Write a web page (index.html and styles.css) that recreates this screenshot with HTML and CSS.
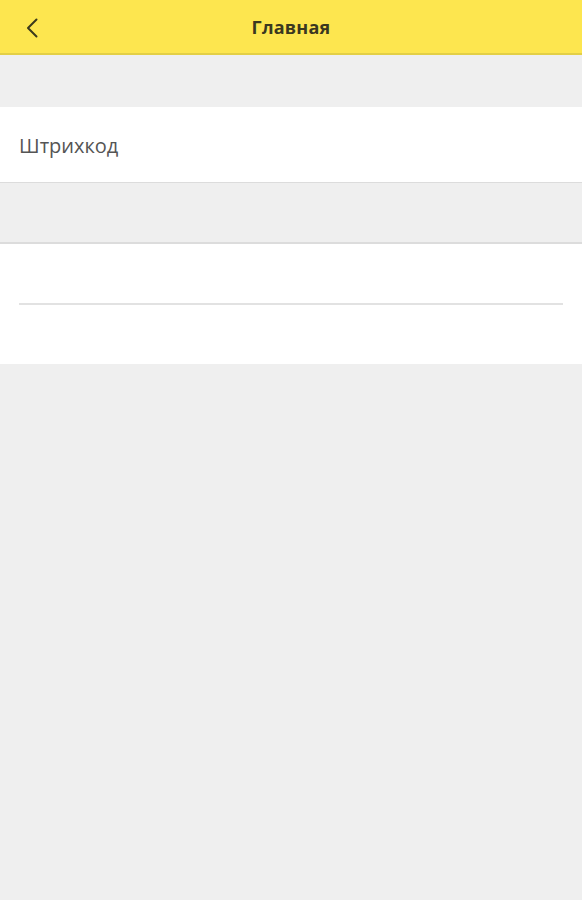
FILE: index.html
```html
<!DOCTYPE html>
<html>
  <head>
    <meta name="viewport" content="width=device-width, initial-scale=1.0" />
    <meta charset="utf-8" />
    <title>Главная</title>
    <link rel="stylesheet" href="styles.css">
  </head>
  <body>
    <header class="header">
      <button class="header__back" type="button" aria-label="Назад">
        <svg width="12" height="20" viewBox="0 0 12 20">
          <path d="M10.5 1.5 L2 10 L10.5 18.5" fill="none" stroke="#3b3a1c" stroke-width="2" stroke-linecap="round" stroke-linejoin="round" />
        </svg>
      </button>
      <h1 class="header__title">Главная</h1>
    </header>

    <div class="gap gap--top"></div>

    <div class="field">
      <span class="field__label">Штрихкод</span>
    </div>

    <div class="gap gap--mid"></div>

    <div class="group">
      <div class="group__input"></div>
    </div>
  </body>
</html>
```

FILE: styles.css
```css
body {
  --color-yellow: #fde64f;
  --color-yellow-line: #e3cf46;
  --color-bg: #efefef;
  --color-line: #dcdcdc;

  margin: 0;
  min-height: 100vh;
  background: var(--color-bg);
  font-family: "Open Sans", Roboto, sans-serif;
}

.header {
  height: 53px;
  display: flex;
  align-items: center;
  justify-content: center;
  position: relative;
  background: var(--color-yellow);
  border-bottom: 2px solid var(--color-yellow-line);
}

.header__back {
  position: absolute;
  left: 25px;
  top: 18px;
  padding: 0;
  border: none;
  background: none;
  width: 14px;
  height: 20px;
  cursor: pointer;
}

.header__title {
  margin: 1px 0 0;
  font-size: 18px;
  font-weight: 700;
  letter-spacing: 0.2px;
  color: #3a3820;
}

.gap--top {
  height: 52px;
}

.field {
  height: 75px;
  display: flex;
  align-items: center;
  padding: 0 19px;
  background: #ffffff;
  border-bottom: 1px solid var(--color-line);
}

.field__label {
  font-size: 20px;
  color: #555555;
  margin-top: 1px;
}

.gap--mid {
  height: 59px;
}

.group {
  height: 122px;
  padding: 0 19px;
  background: #ffffff;
  border-top: 2px solid var(--color-line);
  box-sizing: border-box;
}

.group__input {
  height: 59px;
  border-bottom: 2px solid #e2e2e2;
}
```
